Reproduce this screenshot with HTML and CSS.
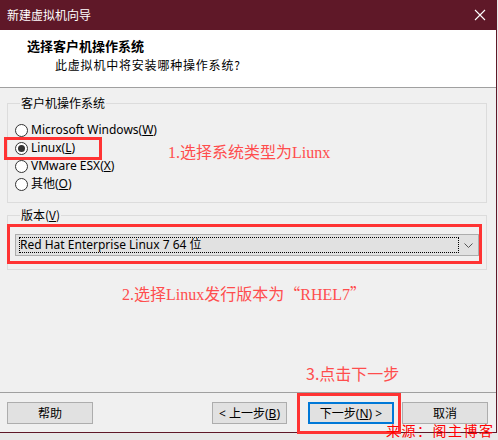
FILE: index.html
```html
<!doctype html>
<html lang="zh-CN">
<head>
    <meta charset="utf-8" />
    <title>新建虚拟机向导</title>
    <link rel="stylesheet" href="styles.css">
</head>
<body>
    <div class="window">
        <!-- Title bar -->
        <div class="titlebar">
            <span>新建虚拟机向导</span>
            <svg class="close" width="12" height="12" viewBox="0 0 12 12">
                <path d="M1 1 L11 11 M11 1 L1 11" stroke="#fff" stroke-width="1.1" fill="none" />
            </svg>
        </div>

        <!-- Header -->
        <div class="header">
            <h1>选择客户机操作系统</h1>
            <p>此虚拟机中将安装哪种操作系统?</p>
        </div>

        <!-- Content -->
        <div class="content">
            <fieldset class="group os-group">
                <legend>客户机操作系统</legend>
                <div class="radio"><span class="circle"></span>Microsoft Windows(<u>W</u>)</div>
                <div class="radio checked"><span class="circle"></span>Linux(<u>L</u>)</div>
                <div class="radio"><span class="circle"></span>VMware ESX(<u>X</u>)</div>
                <div class="radio"><span class="circle"></span>其他(<u>O</u>)</div>
            </fieldset>

            <fieldset class="group version-group">
                <legend>版本(<u>V</u>)</legend>
                <div class="combo">
                    <div class="combo-value">Red Hat Enterprise Linux 7 64 位</div>
                    <div class="combo-arrow">
                        <svg width="9" height="5" viewBox="0 0 9 5">
                            <path d="M0.5 0.5 L4.5 4.5 L8.5 0.5" stroke="#555" stroke-width="1" fill="none" />
                        </svg>
                    </div>
                </div>
            </fieldset>

            <div class="note note-2">2.选择Linux发行版本为<span class="cjk">“</span>RHEL7<span class="cjk">”</span></div>
            <div class="note note-3">3.点击下一步</div>
        </div>

        <!-- Footer buttons -->
        <div class="footer">
            <button class="btn btn-help">帮助</button>
            <button class="btn btn-back">&lt; 上一步(<u>B</u>)</button>
            <button class="btn btn-next">下一步(<u>N</u>) &gt;</button>
            <button class="btn btn-cancel">取消</button>
        </div>

        <!-- Annotations drawn over the dialog -->
        <div class="note note-1">1.选择系统类型为Liunx</div>
        <div class="mark mark-linux"></div>
        <div class="mark mark-version"></div>
        <div class="mark mark-next"></div>
    </div>

    <div class="source">来源：阁主博客</div>
</body>
</html>
```

FILE: styles.css
```css
body {
    margin: 0;
    background: #e8e8e8;
    font-family: "Segoe UI", "Noto Sans", "Noto Sans CJK SC", sans-serif;
    font-size: 12px;
    line-height: 16px;
    color: #000;
    position: relative;
    height: 440px;
    overflow: hidden;
}
.window {
    position: relative;
    width: 497px;
    height: 433px;
    box-sizing: border-box;
    border-right: 1px solid #5f1828;
    border-bottom: 1px solid #5f1828;
    background: #f0f0f0;
    display: flex;
    flex-direction: column;
}
.titlebar {
    height: 30px;
    flex: none;
    background: #5f1828;
    color: #fff;
    display: flex;
    align-items: center;
    justify-content: space-between;
    padding: 0 10px 0 7px;
    font-family: "Noto Sans CJK SC", sans-serif;
}
.header {
    height: 50px;
    flex: none;
    background: #fff;
    border-bottom: 1px solid #a0a0a0;
    padding-top: 7px;
    box-sizing: content-box;
}
.header h1 {
    margin: 0 0 0 27px;
    font-size: 13px;
    line-height: 18px;
    font-weight: bold;
    font-family: "Noto Sans CJK SC", sans-serif;
}
.header p {
    margin: 1px 0 0 55px;
    line-height: 18px;
    font-size: 12px;
    letter-spacing: 0.8px;
    font-family: "Noto Sans CJK SC", sans-serif;
}
.content {
    flex: 1;
    display: flex;
    flex-direction: column;
}
.group {
    border: 1px solid #dcdcdc;
    margin: 0 9px 0 7px;
    padding: 0 7px;
    min-width: 0;
}
.group legend {
    margin-left: 5px;
    padding: 0 1px;
    height: 16px;
    line-height: 16px;
    font-family: "Noto Sans CJK SC", "Noto Sans", sans-serif;
}
.os-group {
    margin-top: 7px;
    padding-top: 10px;
    padding-bottom: 9px;
}
.radio {
    display: flex;
    align-items: center;
    height: 18px;
    line-height: 18px;
}
.circle {
    width: 13px;
    height: 13px;
    box-sizing: border-box;
    border: 1px solid #333;
    border-radius: 50%;
    background: #fff;
    margin-right: 3px;
    display: flex;
    align-items: center;
    justify-content: center;
}
.checked .circle::after {
    content: "";
    width: 7px;
    height: 7px;
    border-radius: 50%;
    background: #333;
}
.version-group {
    margin-top: 4px;
    padding-top: 11px;
    padding-bottom: 13px;
}
.combo {
    display: flex;
    align-items: center;
    height: 22px;
    box-sizing: border-box;
    border: 1px solid #adadad;
    background: #e1e1e1;
    padding: 2px 0 2px 3px;
}
.combo-value {
    flex: 1;
    height: 16px;
    box-sizing: border-box;
    border: 1px dotted #000;
    line-height: 14px;
    color: #000;
}
.combo-arrow {
    width: 19px;
    display: flex;
    justify-content: center;
}
.note {
    color: #ff4d4d;
    font-size: 16px;
    line-height: 20px;
    font-family: "Liberation Serif", "Noto Sans CJK SC", serif;
}
.note .cjk {
    font-family: "Noto Sans CJK SC", sans-serif;
}
.note-1 {
    position: absolute;
    left: 168px;
    top: 143px;
}
.note-2 {
    margin: 13px 0 0 122px;
}
.note-3 {
    margin: auto 0 9px 306px;
    font-family: "Noto Sans CJK SC", sans-serif;
}
.footer {
    height: 30px;
    flex: none;
    border-top: 1px solid #a0a0a0;
    display: flex;
    align-items: flex-start;
    padding: 9px 0 0 7px;
    box-sizing: content-box;
}
.btn {
    height: 22px;
    border: 1px solid #adadad;
    background: #e1e1e1;
    font-family: "Segoe UI", "Noto Sans", "Noto Sans CJK SC", sans-serif;
    font-size: 12px;
    padding: 0;
    color: #000;
}
.btn-help {
    width: 86px;
}
.btn-back {
    width: 75px;
    margin-left: auto;
}
.btn-next {
    width: 86px;
    margin-left: 21px;
    border: 2px solid #0078d7;
}
.btn-cancel {
    width: 86px;
    margin-left: 8px;
    margin-right: 8px;
}
.mark {
    position: absolute;
    border: 3px solid #ff3333;
    box-sizing: border-box;
}
.mark-linux {
    left: 4px;
    top: 137px;
    width: 98px;
    height: 23px;
}
.mark-version {
    left: 7px;
    top: 224px;
    width: 475px;
    height: 40px;
}
.mark-next {
    left: 297px;
    top: 393px;
    width: 104px;
    height: 41px;
}
.source {
    position: absolute;
    left: 386px;
    top: 420px;
    color: #ff0000;
    font-size: 14px;
    line-height: 20px;
    letter-spacing: 1.5px;
    white-space: nowrap;
    font-family: "Noto Sans CJK SC", sans-serif;
}
```
